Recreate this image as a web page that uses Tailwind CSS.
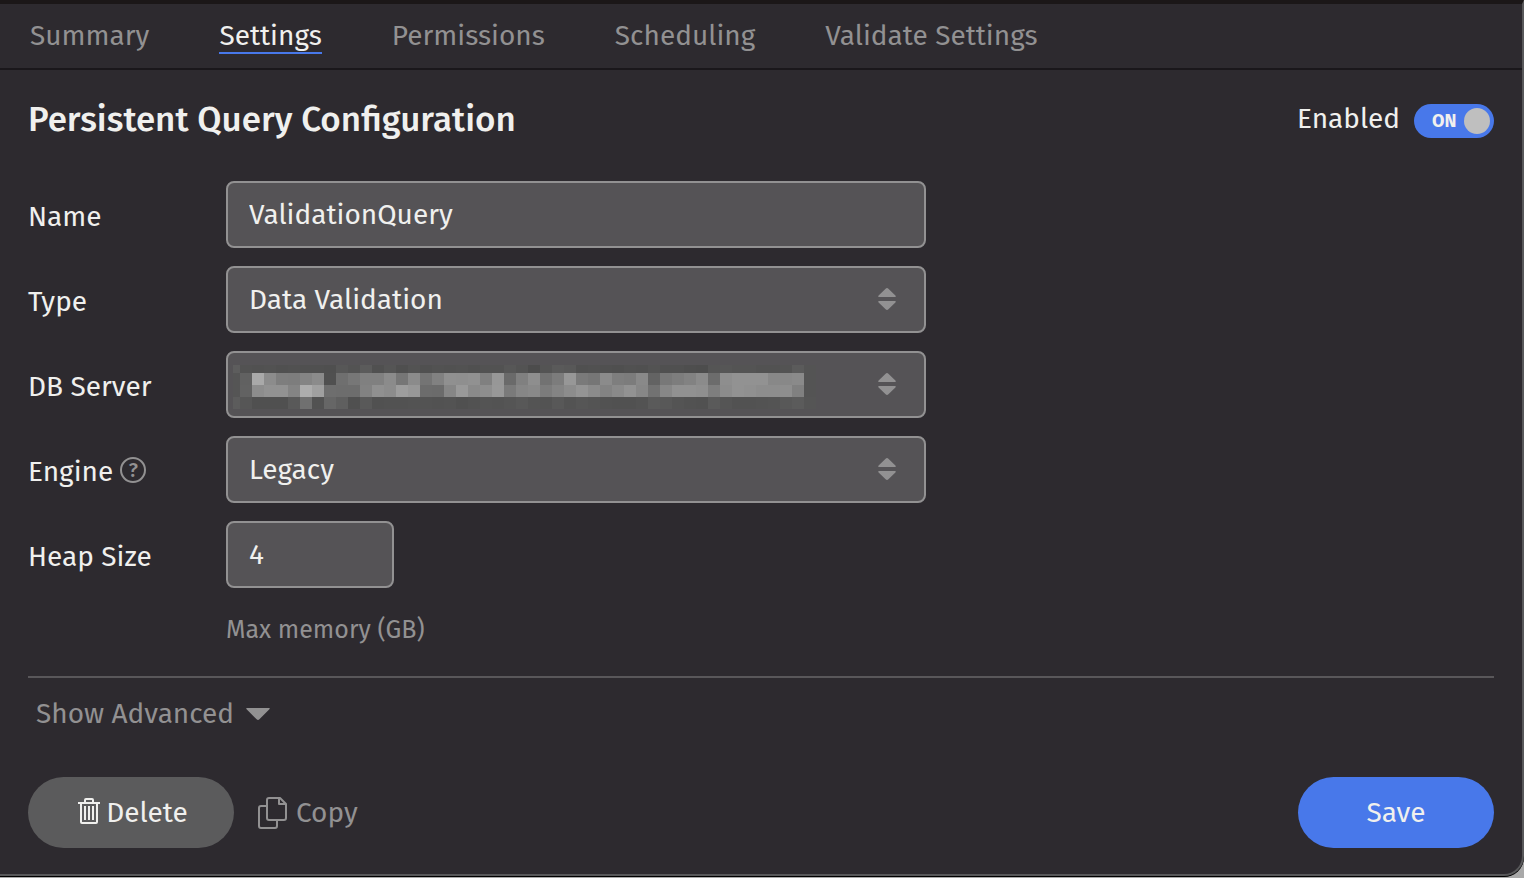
<!DOCTYPE html>
<html lang="en">
<head>
    <meta charset="UTF-8">
    <meta name="viewport" content="width=device-width, initial-scale=1.0">
    <title>Persistent Query Configuration</title>
    <script src="https://cdn.jsdelivr.net/npm/@tailwindcss/browser@4"></script>
</head>
<body class="bg-[#a9a9a9] text-[#f0f0ee] text-[28px] leading-[36px] font-['Fira_Sans','Noto_Sans',sans-serif]">
<div class="min-h-screen flex flex-col pb-px">
    <div class="grow flex flex-col rounded-br-[20px] border-b border-black bg-black">
    <div class="grow flex flex-col bg-[#2d2a2f] border-t-4 border-t-[#1b1718] border-r-2 border-r-[#58585a] border-b-2 border-b-[#58585a] rounded-br-[20px]">

        <!-- Tabs -->
        <nav class="h-[66px] shrink-0 flex items-start gap-[70px] pl-[30px] pt-4 leading-8 border-b-2 border-[#1a171b] text-[#929192]">
            <a href="#summary">Summary</a>
            <a href="#settings" class="text-[#f0f0ee] border-b-2 border-[#4878ea]">Settings</a>
            <a href="#permissions">Permissions</a>
            <a href="#scheduling">Scheduling</a>
            <a href="#validate">Validate Settings</a>
        </nav>

        <form class="grow flex flex-col px-7" onsubmit="return false">
            <!-- Title row -->
            <div class="flex items-center justify-between pt-6">
                <h1 class="text-[35px] leading-[50px] font-medium">Persistent Query Configuration</h1>
                <div class="flex items-center gap-[14px]">
                    <span id="enabled-label">Enabled</span>
                    <button type="button" role="switch" aria-checked="true" aria-labelledby="enabled-label" class="w-20 h-[34px] mt-1 rounded-full bg-[#4878ea] flex items-center justify-between pl-[18px] pr-1 text-lg font-bold">
                        ON
                        <span class="size-[26px] rounded-full bg-[#bfbfbf]"></span>
                    </button>
                </div>
            </div>

            <!-- Fields -->
            <div class="grid grid-cols-[198px_minmax(0,700px)] items-center gap-y-[18px] mt-[37px]">
                <label for="name" class="pt-1">Name</label>
                <input id="name" type="text" value="ValidationQuery" class="w-full h-[67px] px-[21px] rounded-lg border-2 border-[#929192] bg-[#555356]">

                <label for="type" class="pt-1">Type</label>
                <div class="relative">
                    <select id="type" class="appearance-none block w-full h-[67px] px-[21px] rounded-lg border-2 border-[#929192] bg-[#555356]">
                        <option>Data Validation</option>
                    </select>
                    <svg class="absolute right-[30px] top-[22px] w-[18px] h-[22px] pointer-events-none" viewBox="0 0 18 22" fill="#929192"><path d="M1 9Q-.5 9 .6 7.6L7.6.7Q9-.6 10.4.7L17.4 7.6Q18.5 9 17 9ZM1 13Q-.5 13 .6 14.4L7.6 21.3Q9 22.6 10.4 21.3L17.4 14.4Q18.5 13 17 13Z"/></svg>
                </div>

                <label for="server" class="pt-1">DB Server</label>
                <div class="relative">
                    <select id="server" class="appearance-none block w-full h-[67px] px-[21px] rounded-lg border-2 border-[#929192] bg-[#555356]">
                        <option></option>
                    </select>
                    <svg id="redacted" class="absolute left-[7px] top-[14px] w-[583px] h-[44px] pointer-events-none" viewBox="0 0 583 44" shape-rendering="crispEdges"></svg>
                    <svg class="absolute right-[30px] top-[22px] w-[18px] h-[22px] pointer-events-none" viewBox="0 0 18 22" fill="#929192"><path d="M1 9Q-.5 9 .6 7.6L7.6.7Q9-.6 10.4.7L17.4 7.6Q18.5 9 17 9ZM1 13Q-.5 13 .6 14.4L7.6 21.3Q9 22.6 10.4 21.3L17.4 14.4Q18.5 13 17 13Z"/></svg>
                </div>

                <div class="flex items-center gap-[7px]">
                    <label for="engine" class="pt-1">Engine</label>
                    <button type="button" aria-label="About engines" class="size-[26px] rounded-full border-2 border-[#929192] text-[#929192] text-xl leading-none font-medium flex items-center justify-center">?</button>
                </div>
                <div class="relative">
                    <select id="engine" class="appearance-none block w-full h-[67px] px-[21px] rounded-lg border-2 border-[#929192] bg-[#555356]">
                        <option>Legacy</option>
                    </select>
                    <svg class="absolute right-[30px] top-[22px] w-[18px] h-[22px] pointer-events-none" viewBox="0 0 18 22" fill="#929192"><path d="M1 9Q-.5 9 .6 7.6L7.6.7Q9-.6 10.4.7L17.4 7.6Q18.5 9 17 9ZM1 13Q-.5 13 .6 14.4L7.6 21.3Q9 22.6 10.4 21.3L17.4 14.4Q18.5 13 17 13Z"/></svg>
                </div>

                <label for="heap" class="pt-1">Heap Size</label>
                <input id="heap" type="text" value="4" class="w-[168px] h-[67px] px-[21px] rounded-lg border-2 border-[#929192] bg-[#555356]">
            </div>
            <p class="ml-[198px] mt-6 text-[25px] text-[#929192]">Max memory (GB)</p>

            <hr class="mt-7 border-t-2 border-[#59575a]">

            <button type="button" class="self-start flex items-center gap-3 mt-[18px] ml-2 text-[#929192]">
                Show Advanced
                <svg class="w-6 h-3" viewBox="0 0 24 12" fill="currentColor"><path d="M1 0H23Q24.5 .2 23.4 1.3L13.4 11.3Q12 12.6 10.6 11.3L.6 1.3Q-.5 .2 1 0Z"/></svg>
            </button>

            <!-- Actions -->
            <div class="flex items-center mt-[45px] mb-[26px]">
                <button type="button" class="w-[206px] h-[71px] pl-1 rounded-full bg-[#5b5b5c] flex items-center justify-center gap-[6px]">
                    <svg class="w-[22px] h-[26px] mb-1" viewBox="0 0 22 26" fill="none" stroke="currentColor" stroke-width="2"><path d="M0 5H22M7 5V2Q7 1 8 1H14Q15 1 15 2V5M3 5V24Q3 25 4 25H18Q19 25 19 24V5M7 8V22M11 8V22M15 8V22"/></svg>
                    Delete
                </button>
                <button type="button" class="ml-6 flex items-center gap-[9px] text-[#929192]">
                    <svg class="w-[29px] h-8" viewBox="0 0 29 32" fill="none" stroke="currentColor" stroke-width="2" stroke-linejoin="round"><path d="M9 9H3Q1 9 1 11V29Q1 31 3 31H17Q19 31 19 29V23M11 1H22L28 7V21Q28 23 26 23H11Q9 23 9 21V3Q9 1 11 1ZM21 1V7H28"/></svg>
                    Copy
                </button>
                <button type="submit" class="ml-auto w-[196px] h-[71px] rounded-full bg-[#4878ea]">Save</button>
            </div>
        </form>
    </div>
    </div>
</div>

<script>
    // Grey level of each tile, two hex digits per tile
    const rows = [
        { y: 0, h: 8, tiles: '5d 52 51 52 50 51 50 50 4f 57 53 5b 50 55 4f 53 50 52 51 52 50 52 52 57 53 4c 54 5a 58 50 51 50 4f 51 50 53 50 50 4e 4d 55 56 54 54 52 52 53 5b 54' },
        { y: 8, h: 12, tiles: '55 61 a9 8c 7e 7d 84 8b 50 6f 77 80 80 8b 76 8b 74 81 90 8f 91 80 97 6a 80 8e 72 7c 97 7a 76 8b 7e 7c 89 63 78 7d 82 8b 6c 8e 92 92 92 88 88 8a 54' },
        { y: 20, h: 12, tiles: '55 62 8d 92 92 84 ad a0 6e 6d 6d 82 90 8c 9d 97 6c 6b 86 99 8a 8e 98 7a 86 89 7c 84 8c 94 8b 83 8a 92 87 72 87 91 91 8f 7e 8c 92 90 8d 8d 8e 80 54' },
        { y: 32, h: 12, tiles: '5c 56 50 50 50 59 70 52 66 5f 50 59 51 52 52 53 53 52 53 50 52 54 53 55 58 54 53 58 53 56 54 52 51 51 53 5a 58 54 52 51 5a 55 52 52 53 54 58 5b 55' }
    ];
    const svg = document.getElementById('redacted');
    rows.forEach(row => {
        row.tiles.split(' ').forEach((v, i) => {
            const rect = document.createElementNS('http://www.w3.org/2000/svg', 'rect');
            rect.setAttribute('x', i === 0 ? 0 : 7 + (i - 1) * 12);
            rect.setAttribute('y', row.y);
            rect.setAttribute('width', i === 0 ? 7 : 12);
            rect.setAttribute('height', row.h);
            rect.setAttribute('fill', `#${v}${v}${v}`);
            svg.appendChild(rect);
        });
    });
</script>
</body>
</html>
